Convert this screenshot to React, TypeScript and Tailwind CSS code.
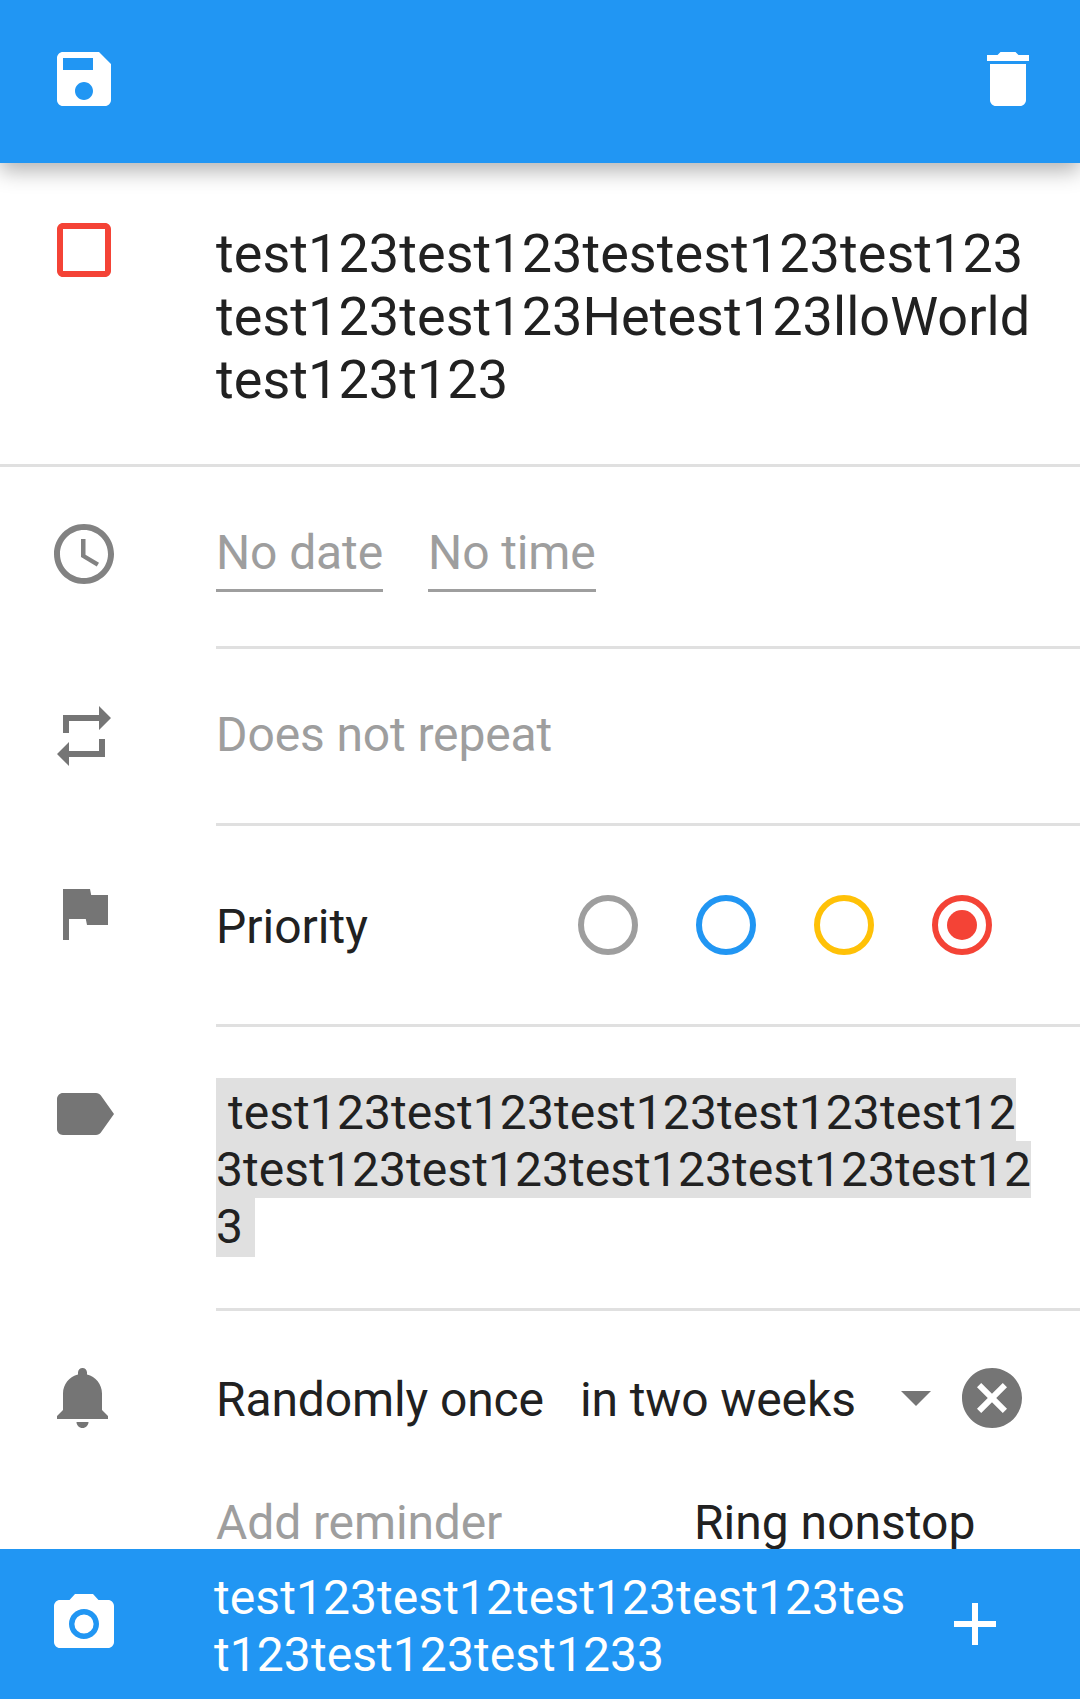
import type { ReactNode } from "react";

const paths = {
  save: "M17 3H5c-1.11 0-2 .9-2 2v14c0 1.1.89 2 2 2h14c1.1 0 2-.9 2-2V7l-4-4zm-5 16c-1.66 0-3-1.34-3-3s1.34-3 3-3 3 1.34 3 3-1.34 3-3 3zm3-10H5V5h10v4z",
  trash: "M6 19c0 1.1.9 2 2 2h8c1.1 0 2-.9 2-2V7H6v12zM19 4h-3.5l-1-1h-5l-1 1H5v2h14V4z",
  checkbox: "M19 5v14H5V5h14m0-2H5c-1.1 0-2 .9-2 2v14c0 1.1.9 2 2 2h14c1.1 0 2-.9 2-2V5c0-1.1-.9-2-2-2z",
  clock: "M11.99 2C6.47 2 2 6.48 2 12s4.47 10 9.99 10C17.52 22 22 17.52 22 12S17.52 2 11.99 2zM12 20c-4.42 0-8-3.58-8-8s3.58-8 8-8 8 3.58 8 8-3.58 8-8 8zm.5-13H11v6l5.25 3.15.75-1.23-4.5-2.67z",
  repeat: "M7 7h10v3l4-4-4-4v3H5v6h2V7zm10 10H7v-3l-4 4 4 4v-3h12v-6h-2v4z",
  flag: "M14.4 6L14 4H5v17h2v-7h5.6l.4 2h7V6z",
  label: "M17.63 5.84C17.27 5.33 16.67 5 16 5L5 5.01C3.9 5.01 3 5.9 3 7v10c0 1.1.9 1.99 2 1.99L16 19c.67 0 1.27-.33 1.63-.84L22 12l-4.37-6.16z",
  bell: "M11.5 22c1.1 0 2-.9 2-2h-4c0 1.1.9 2 2 2zM18 16v-5.5c0-3.07-2.13-5.64-5-6.32V3.5c0-.83-.67-1.5-1.5-1.5S10 2.67 10 3.5v.68c-2.87.68-5 3.25-5 6.32V16l-2 2v1h17v-1l-2-2z",
  cancel: "M12 2C6.47 2 2 6.47 2 12s4.47 10 10 10 10-4.47 10-10S17.53 2 12 2zm5 13.59L15.59 17 12 13.41 8.41 17 7 15.59 10.59 12 7 8.41 8.41 7 12 10.59 15.59 7 17 8.41 13.41 12 17 15.59z",
  camera: "M9 2L7.17 4H4c-1.1 0-2 .9-2 2v12c0 1.1.9 2 2 2h16c1.1 0 2-.9 2-2V6c0-1.1-.9-2-2-2h-3.17L15 2H9zm3 15c-2.76 0-5-2.24-5-5s2.24-5 5-5 5 2.24 5 5-2.24 5-5 5zm0-8.2a3.2 3.2 0 1 0 0 6.4 3.2 3.2 0 0 0 0-6.4z",
  add: "M19 13h-6v6h-2v-6H5v-2h6V5h2v6h6v2z",
};

function Icon({ d, className }: { d: string; className: string }) {
  return (
    <svg viewBox="0 0 24 24" className={`h-[72px] w-[72px] shrink-0 fill-current ${className}`}>
      <path d={d} />
    </svg>
  );
}

function Row({ icon, children, className }: { icon: ReactNode; children: ReactNode; className: string }) {
  return (
    <div className={`flex ${className}`}>
      <div className="w-[216px] shrink-0 pl-12">{icon}</div>
      <div className="min-w-0 flex-1">{children}</div>
    </div>
  );
}

function Radio({ color, checked }: { color: string; checked?: boolean }) {
  return (
    <div className={`flex h-[60px] w-[60px] items-center justify-center rounded-full border-[6px] ${color}`}>
      {checked && <div className="h-[30px] w-[30px] rounded-full bg-[#f44336]" />}
    </div>
  );
}

export default function App() {
  return (
    <div className="flex h-[1699px] w-[1080px] flex-col overflow-hidden bg-white font-[Roboto,sans-serif] text-[48px] tracking-[-0.12px] text-[#212121]">
      <header className="relative z-10 flex h-[163px] shrink-0 items-start justify-between bg-[#2196f3] pl-12 pr-9 pt-[43px] text-white shadow-[0_8px_20px_rgba(0,0,0,0.3)]">
        <Icon d={paths.save} className="" />
        <Icon d={paths.trash} className="" />
      </header>

      <main className="min-h-0 flex-1 overflow-hidden">
        <div className="flex h-[301px]">
          <div className="w-[216px] shrink-0 pl-12 pt-[51px]">
            <Icon d={paths.checkbox} className="text-[#f44336]" />
          </div>
          <div className="whitespace-nowrap pt-[59px] text-[54px] leading-[63px] tracking-[0.05px]">
            test123test123testest123test123
            <br />
            test123test123Hetest123lloWorld
            <br />
            test123t123
          </div>
        </div>
        <div className="h-[3px] bg-[#e0e0e0]" />

        <Row
          className="h-[179px] pt-[51px]"
          icon={<Icon d={paths.clock} className="text-[#757575] opacity-90" />}
        >
          <div className="flex gap-[45px] text-[#9e9e9e]">
            <span className="h-[74px] border-b-[3px] border-[#9e9e9e] pt-[7px] leading-[56px]">No date</span>
            <span className="h-[74px] border-b-[3px] border-[#9e9e9e] pt-[7px] leading-[56px]">No time</span>
          </div>
        </Row>
        <div className="ml-[216px] h-[3px] bg-[#e0e0e0]" />

        <Row
          className="h-[174px] pt-[58px]"
          icon={<Icon d={paths.repeat} className="-mt-[7px] text-[#757575]" />}
        >
          <div className="leading-[56px] text-[#9e9e9e]">Does not repeat</div>
        </Row>
        <div className="ml-[216px] h-[3px] bg-[#e0e0e0]" />

        <Row
          className="h-[198px] pt-[51px]"
          icon={<Icon d={paths.flag} className="text-[#757575]" />}
        >
          <div className="flex items-center justify-between pr-[88px] pt-[18px]">
            <span className="h-[60px] pt-[2px] leading-[60px] tracking-normal">Priority</span>
            <div className="flex gap-[58px]">
              <Radio color="border-[#9e9e9e]" />
              <Radio color="border-[#2196f3]" />
              <Radio color="border-[#ffc107]" />
              <Radio color="border-[#f44336]" checked />
            </div>
          </div>
        </Row>
        <div className="ml-[216px] h-[3px] bg-[#e0e0e0]" />

        <Row
          className="h-[281px] pt-[51px]"
          icon={<Icon d={paths.label} className="text-[#757575]" />}
        >
          <div className="whitespace-pre leading-[57px] tracking-[0.06px]">
            <div className="w-fit bg-[#e0e0e0] pt-[6px]">{"\u00a0test123test123test123test123test12"}</div>
            <div className="w-fit bg-[#e0e0e0]">3test123test123test123test123test12</div>
            <div className="w-fit bg-[#e0e0e0] pb-[2px]">{"3\u00a0"}</div>
          </div>
        </Row>
        <div className="ml-[216px] h-[3px] bg-[#e0e0e0]" />

        <Row
          className="pt-[51px]"
          icon={<Icon d={paths.bell} className="text-[#757575]" />}
        >
          <div className="flex h-[72px] items-center">
            <span className="w-[364px] pt-[4px]">Randomly once</span>
            <span className="w-[321px] pt-[4px]">in two weeks</span>
            <div className="h-0 w-0 border-x-[15px] border-t-[15px] border-x-transparent border-t-[#757575]" />
            <Icon d={paths.cancel} className="ml-[25px] text-[#757575]" />
          </div>
          <div className="mt-[61px] flex leading-[56px]">
            <span className="w-[478px] text-[#9e9e9e]">Add reminder</span>
            <span className="tracking-normal">Ring nonstop</span>
          </div>
        </Row>
      </main>

      <footer className="flex h-[150px] shrink-0 bg-[#2196f3] text-white">
        <div className="w-[214px] shrink-0 pl-12 pt-[39px]">
          <Icon d={paths.camera} className="" />
        </div>
        <div className="w-[725px] shrink-0 whitespace-nowrap pt-5 leading-[57px] tracking-[0.07px]">
          test123test12test123test123tes
          <br />
          t123test123test1233
        </div>
        <div className="pt-[39px]">
          <Icon d={paths.add} className="" />
        </div>
      </footer>
    </div>
  );
}
